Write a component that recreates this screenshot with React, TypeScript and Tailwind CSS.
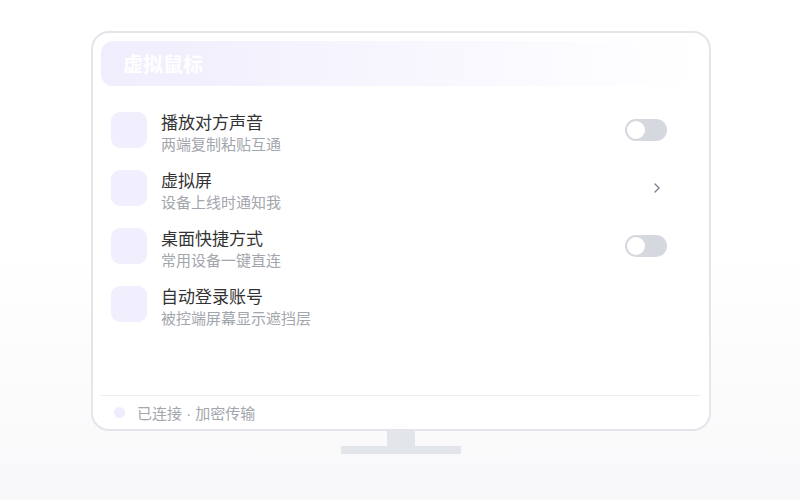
import React from "react";

const rows = [
  { title: "播放对方声音", sub: "两端复制粘贴互通", trail: "toggle" },
  { title: "虚拟屏", sub: "设备上线时通知我", trail: "chevron" },
  { title: "桌面快捷方式", sub: "常用设备一键直连", trail: "toggle" },
  { title: "自动登录账号", sub: "被控端屏幕显示遮挡层", trail: "none" },
];

function Toggle() {
  return (
    <div className="w-[42px] h-[22px] rounded-full bg-[#d5d8de] p-[2px] flex items-center">
      <div className="w-[18px] h-[18px] rounded-full bg-white" />
    </div>
  );
}

export default function App() {
  return (
    <div
      className="w-[800px] h-[500px] bg-gradient-to-b from-white via-white to-[#f8f8fa] overflow-hidden"
      style={{ fontFamily: '"Noto Sans CJK SC", "Noto Sans", sans-serif' }}
    >
      <div className="ml-[91px] pt-[31px] w-[620px] flex flex-col items-center">
        <div className="w-[620px] h-[400px] border-2 border-[#e3e5ea] rounded-[18px] bg-white flex flex-col pt-[8px] px-[8px]">
          <div className="h-[45px] rounded-l-[12px] rounded-r-[4px] bg-gradient-to-r from-[#f0edfd] to-white flex items-center pl-[22px]">
            <span className="text-white text-[20px] font-bold leading-none">虚拟鼠标</span>
          </div>
          <div className="flex flex-col pt-[26px] pl-[10px] pr-[34px]">
            {rows.map((r) => (
              <div key={r.title} className="h-[58px] flex items-start">
                <div className="w-[36px] h-[36px] rounded-[9px] bg-[#f1eefd] shrink-0" />
                <div className="ml-[14px] -mt-[1px] flex flex-col flex-1">
                  <span className="text-[17px] leading-[22px] text-[#333333]">{r.title}</span>
                  <span className="text-[15px] leading-[22px] text-[#a3a6ad]">{r.sub}</span>
                </div>
                <div className="w-[42px] h-[36px] flex items-center justify-end shrink-0">
                  {r.trail === "toggle" && <Toggle />}
                  {r.trail === "chevron" && (
                    <svg width="6" height="10" viewBox="0 0 6 10" className="mr-[7px]">
                      <path d="M1 1 L5 5 L1 9" fill="none" stroke="#7b808a" strokeWidth="1.3" strokeLinecap="round" strokeLinejoin="round" />
                    </svg>
                  )}
                </div>
              </div>
            ))}
          </div>
          <div className="flex-1" />
          <div className="border-t border-[#eceef2] h-[34px] flex items-center pl-[13px]">
            <div className="w-[11px] h-[11px] rounded-full bg-[#efecfd]" />
            <span className="ml-[12px] text-[15px] text-[#a3a6ad] leading-none">
              已连接
              <span style={{ fontFamily: '"Liberation Sans", sans-serif' }}> · </span>
              加密传输
            </span>
          </div>
        </div>
        <div className="w-[28px] h-[16px] bg-[#e2e5ea]" />
        <div className="w-[120px] h-[8px] bg-[#e2e5ea] -mt-[1px]" />
      </div>
    </div>
  );
}
